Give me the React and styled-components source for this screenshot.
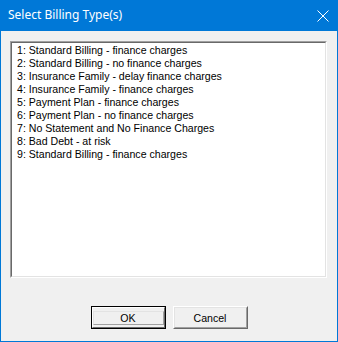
import React from "react";
import styled, { createGlobalStyle } from "styled-components";

const Global = createGlobalStyle`
  html, body { margin: 0; padding: 0; background: #f0f0f0; }
  #root { width: 338px; height: 342px; }
`;

const Window = styled.div`
  box-sizing: border-box;
  width: 338px;
  height: 342px;
  border: 1px solid #0078d7;
  border-top: none;
  background: #f0f0f0;
  display: flex;
  flex-direction: column;
`;

const TitleBar = styled.div`
  height: 31px;
  background: #0078d7;
  display: flex;
  align-items: center;
  justify-content: space-between;
  padding: 0 9px 0 8px;
  margin: 0 -1px;
  flex: none;
`;

const Title = styled.div`
  color: #fff;
  font-family: "Noto Sans", sans-serif;
  font-size: 12px;
  line-height: 16px;
  padding-bottom: 1px;
`;

const CloseIcon = styled.svg`
  width: 12px;
  height: 12px;
  display: block;
`;

const Body = styled.div`
  flex: 1;
  display: flex;
  flex-direction: column;
  padding: 10px 10px 0 9px;
`;

const ListBox = styled.div`
  box-sizing: border-box;
  height: 237px;
  background: #fff;
  border-style: solid;
  border-width: 1px;
  border-color: #a0a0a0 #fff #fff #a0a0a0;
`;

const ListInner = styled.div`
  box-sizing: border-box;
  height: 100%;
  border-style: solid;
  border-width: 1px;
  border-color: #696969 #e3e3e3 #e3e3e3 #696969;
  padding: 1px 0 0 0;
`;

const Item = styled.div`
  font-family: "Liberation Sans", Arial, sans-serif;
  font-size: 10.6px;
  line-height: 13px;
  height: 13px;
  padding-left: 5px;
  color: #000;
  white-space: nowrap;
`;

const ButtonRow = styled.div`
  display: flex;
  justify-content: center;
  gap: 7px;
  margin-top: 28px;
  padding-left: 1px;
`;

const Button = styled.button`
  box-sizing: border-box;
  width: 75px;
  height: 23px;
  padding: 0;
  margin: 0;
  background: #f0f0f0;
  font-family: "Liberation Sans", Arial, sans-serif;
  font-size: 10.6px;
  color: #000;
  border-style: solid;
  border-width: 1px;
  border-color: ${(p) => (p.$default ? "#000" : "#fff #696969 #696969 #fff")};
  display: flex;
  outline: none;
`;

const ButtonFace = styled.span`
  box-sizing: border-box;
  flex: 1;
  display: flex;
  align-items: center;
  justify-content: center;
  border-style: solid;
  border-width: 1px;
  border-color: ${(p) => (p.$default ? "#fff #696969 #696969 #fff" : "#e3e3e3 #a0a0a0 #a0a0a0 #e3e3e3")};
`;

const ButtonFace2 = styled.span`
  box-sizing: border-box;
  flex: 1;
  display: flex;
  align-items: center;
  justify-content: center;
  border-style: solid;
  border-width: 1px;
  border-color: #e3e3e3 #a0a0a0 #a0a0a0 #e3e3e3;
`;

const items = [
  "1: Standard Billing - finance charges",
  "2: Standard Billing - no finance charges",
  "3: Insurance Family - delay finance charges",
  "4: Insurance Family - finance charges",
  "5: Payment Plan - finance charges",
  "6: Payment Plan - no finance charges",
  "7: No Statement and No Finance Charges",
  "8: Bad Debt - at risk",
  "9: Standard Billing - finance charges",
];

export default function App() {
  return (
    <>
      <Global />
      <Window>
        <TitleBar>
          <Title>Select Billing Type(s)</Title>
          <CloseIcon viewBox="0 0 12 12">
            <path d="M0.5 0.5 L11.5 11.5 M11.5 0.5 L0.5 11.5" stroke="#fff" strokeWidth="1" fill="none" />
          </CloseIcon>
        </TitleBar>
        <Body>
          <ListBox>
            <ListInner>
              {items.map((t) => (
                <Item key={t}>{t}</Item>
              ))}
            </ListInner>
          </ListBox>
          <ButtonRow>
            <Button $default>
              <ButtonFace $default>
                <ButtonFace2>OK</ButtonFace2>
              </ButtonFace>
            </Button>
            <Button>
              <ButtonFace>Cancel</ButtonFace>
            </Button>
          </ButtonRow>
        </Body>
      </Window>
    </>
  );
}
